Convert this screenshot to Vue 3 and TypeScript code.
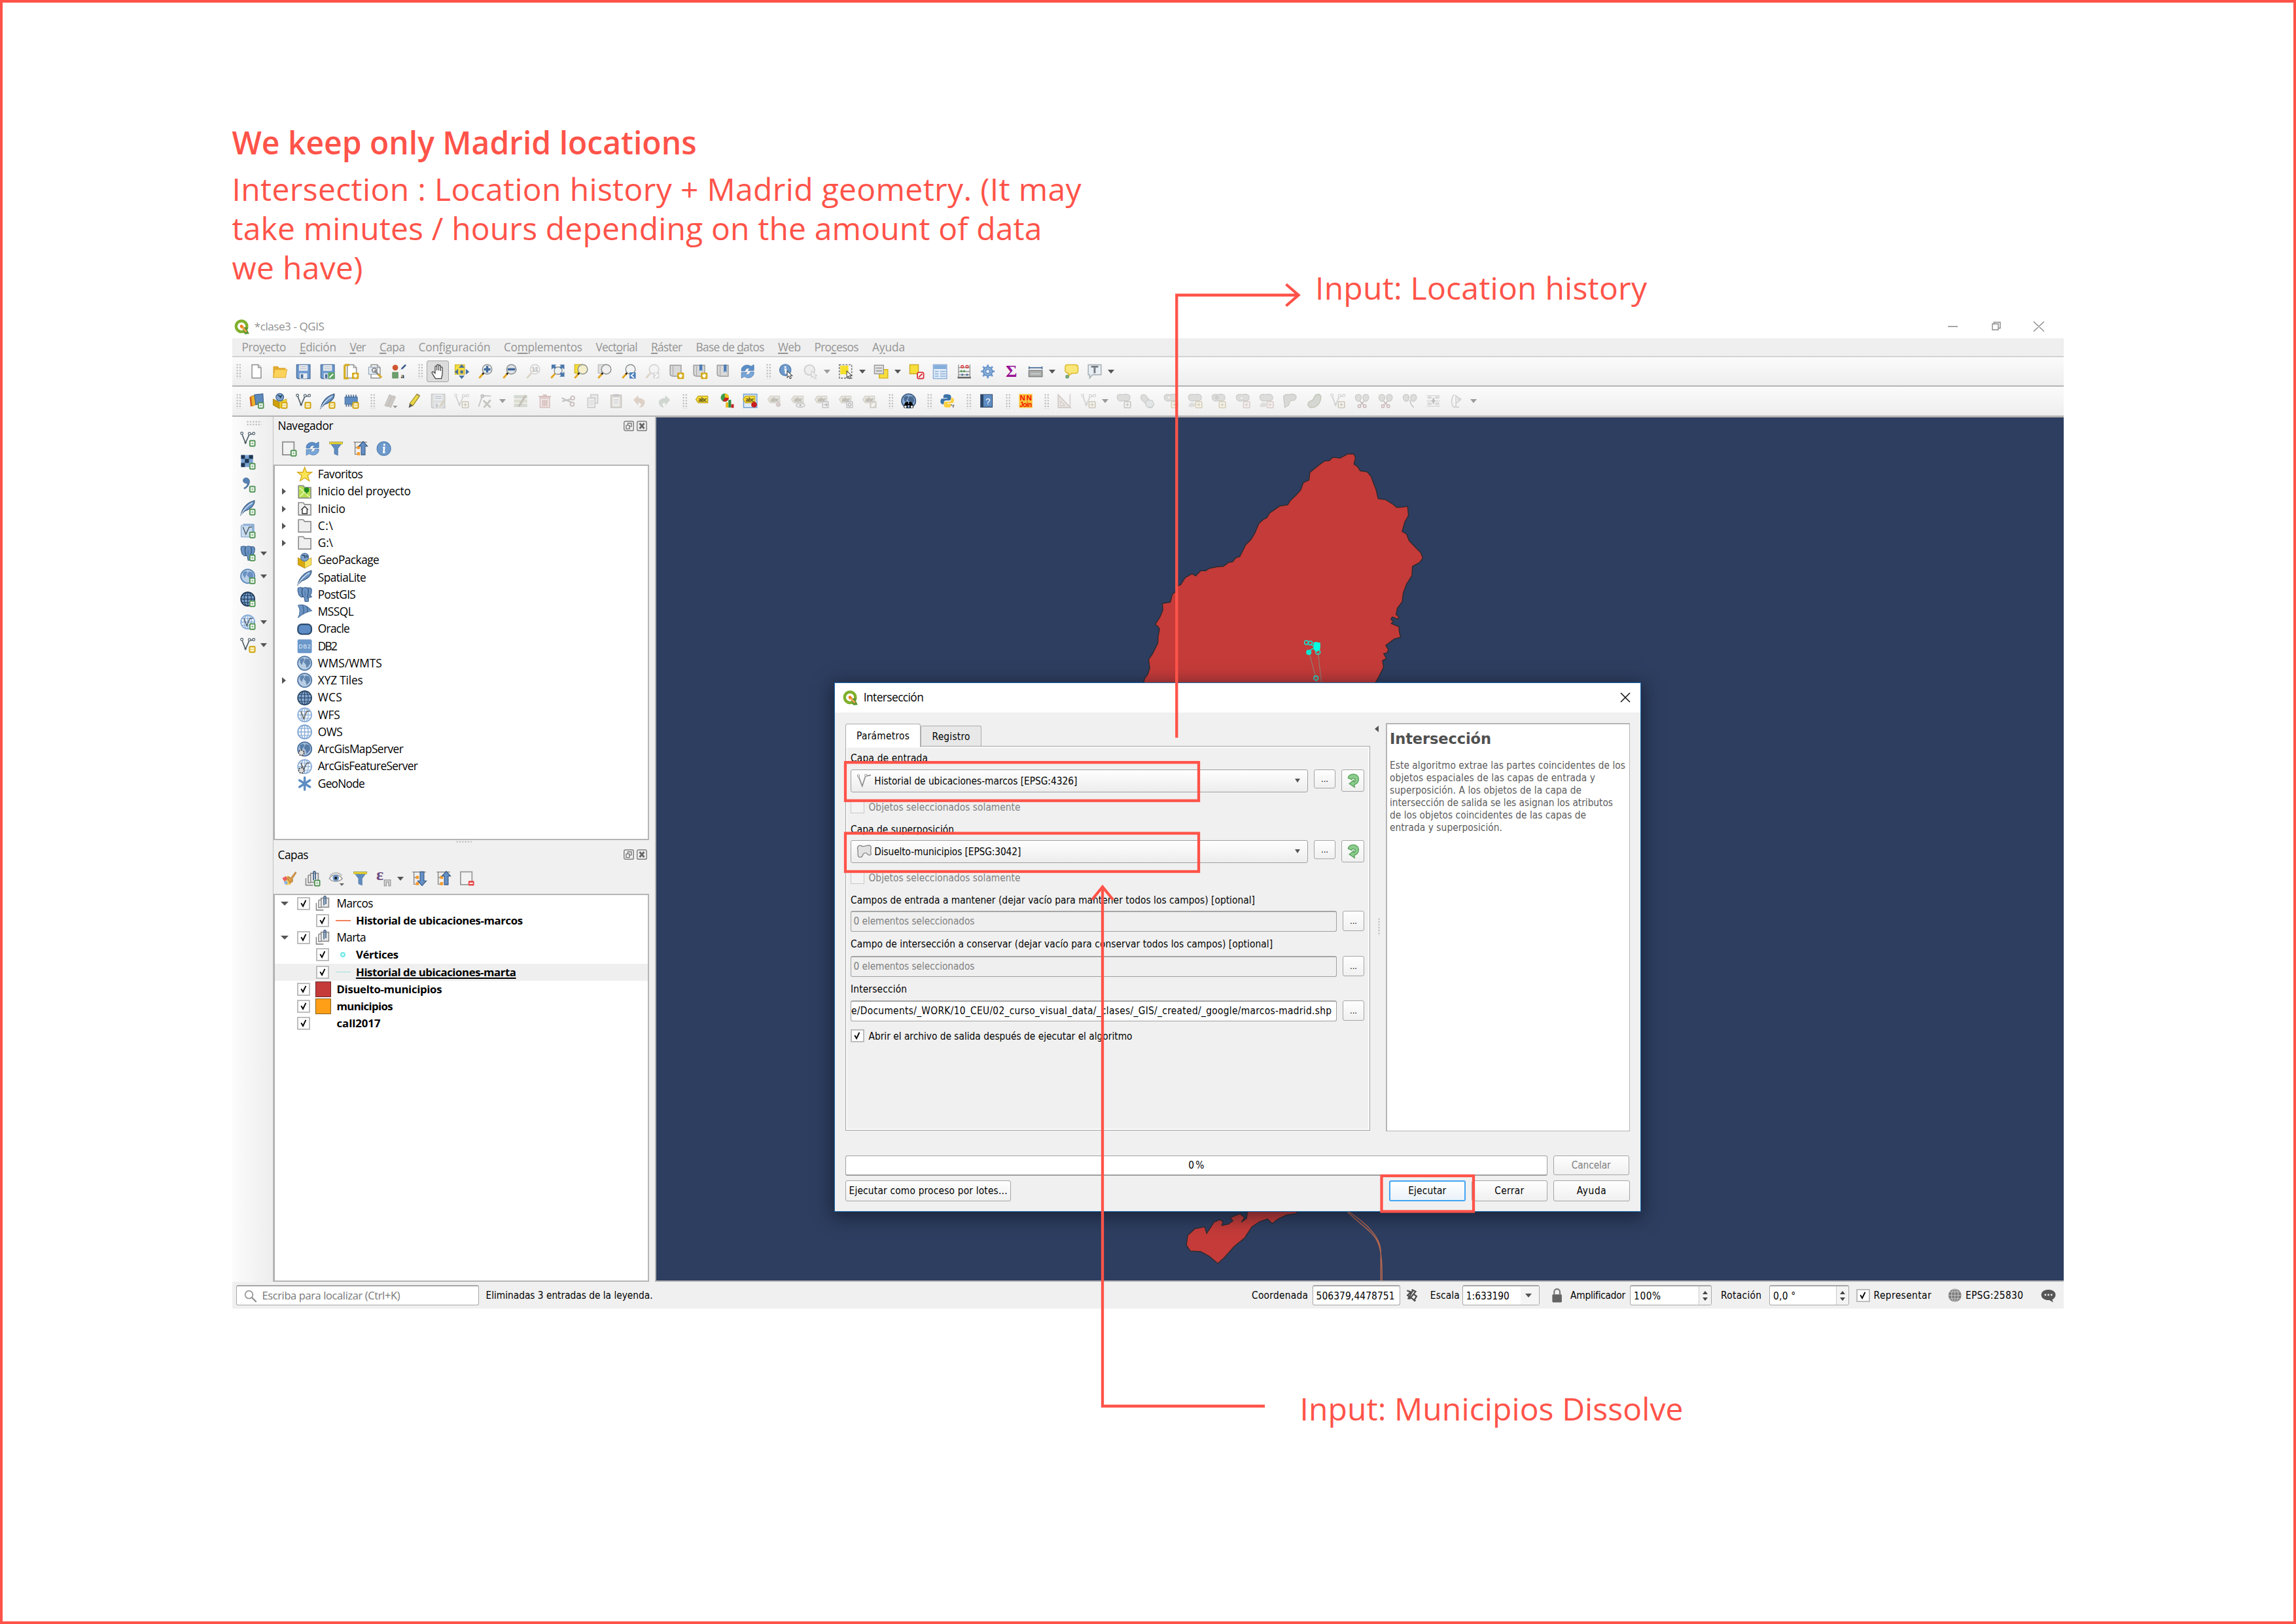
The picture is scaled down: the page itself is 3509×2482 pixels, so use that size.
<script setup lang="ts">
import { h } from 'vue'
import type { FunctionalComponent } from 'vue'

/* Spreads a text run over a given width in pixels. */
const vFit = {
  mounted(el: HTMLElement, binding: { value: number }) {
    const range = document.createRange()
    range.selectNodeContents(el)
    const natural = range.getBoundingClientRect().width
    const count = (el.textContent || '').length
    if (count > 1) el.style.letterSpacing = (binding.value - natural) / (count - 1) + 'px'
    el.style.width = binding.value + 'px'
  },
}

const plus = '<rect x="10.2" y="10" width="5.3" height="5.6" rx=".6" fill="#fff" stroke="#4f9252" stroke-width="1.3"/><path d="M12.8 11.5v2.6M11.5 12.8h2.6" stroke="#8abb8c" stroke-width=".8"/>'
const gold = '<rect x="9.9" y="9.8" width="5.6" height="5.8" rx=".6" fill="#fdf3c8" stroke="#cfa20c" stroke-width="1.3"/><path d="M11 12.7h3.5" stroke="#e9cf70" stroke-width=".9"/>'
const star = '<rect x="9" y="9.2" width="7" height="6.8" rx="1" fill="#d3a80e"/><path d="M12.5 10.3v4.6M10.3 12.6h4.4M11 11.1l3 3M14 11.1l-3 3" stroke="#fff" stroke-width=".9"/>'
const lens = (fill: string, mid = '') =>
  `<path d="M6.2 9.8L1.6 15" stroke="#e3a51d" stroke-width="2"/><path d="M6.8 9.2L5 11" stroke="#222" stroke-width="1.8"/><circle cx="10" cy="5.8" r="5" fill="${fill}" stroke="#8b8f8f" stroke-width="1"/>${mid}`
const lensOff = (mid = '') =>
  `<path d="M6.2 9.8L1.6 15" stroke="#dcd6c8" stroke-width="2"/><circle cx="10" cy="5.8" r="5" fill="#f4f4f4" stroke="#d0d0d0" stroke-width="1"/>${mid}`
const vee = (c: string) =>
  `<path d="M1.8 2.6L5.6 12.4 9.6 3.4 14 2.8" fill="none" stroke="${c}" stroke-width="1.1"/><circle cx="1.8" cy="2.2" r="1.3" fill="#fff" stroke="${c}" stroke-width=".8"/><circle cx="9.8" cy="2.6" r="1.3" fill="#fff" stroke="${c}" stroke-width=".8"/><circle cx="14.2" cy="2.4" r="1.3" fill="#fff" stroke="${c}" stroke-width=".8"/><circle cx="5.6" cy="12" r="1.1" fill="${c}"/>`
const feather = '<path d="M.8 15.6C2 10 6 3 15 .8c.3 4.600-3.500 8.500-10.500 11z" fill="#6a94c6" stroke="#3c5c80" stroke-width=".9"/><path d="M.8 15.600C4 10 8 6 13 3" fill="none" stroke="#d5e3f2" stroke-width=".9"/>'
const globe = (a: string, b: string) =>
  `<circle cx="8" cy="8" r="7.3" fill="${a}" stroke="${b}" stroke-width="1.200"/><path d="M3 4l3-1.500 2 1.500-2 3-1 3-2-3zM9 3l4 1 1 4-2 3-2 2-1-4-2-2z" fill="${b}" opacity=".85"/>`
const grid = (fill: string, line: string) =>
  `<circle cx="8" cy="8" r="7.200" fill="${fill}" stroke="${line}" stroke-width="1.200"/><path d="M8 .8v14.400M.8 8h14.400M2 4.300h12M2 11.700h12" stroke="${line}" stroke-width=".8"/><ellipse cx="8" cy="8" rx="3.800" ry="7.200" fill="none" stroke="${line}" stroke-width=".8"/>`
const elephant = '<path d="M1 1.200C3 .4 5 .6 6 1.200 8 .4 10 .4 11 1.200 13 .4 15 1 15.300 3L15 6.500 13.500 9.300 15.300 9.800 14.500 11H12.200L11.800 15.300H8.300L7.600 10.800 5.800 10.500 4.500 10.800 2 8.500 .8 4z" fill="#6a94c4" stroke="#3d6290" stroke-width=".8"/><path d="M5.700 1.500C4.800 4 5 7.500 6.300 10.300M11.300 1.500C12.300 4 12 7 11 9.500V12" fill="none" stroke="#3a5a80" stroke-width="1"/><path d="M8.400 4.500v5" stroke="#4a70a0" stroke-width=".8"/>'
const folder = '<path d="M1.500 1.500h5l1.500 2h6.500v11h-13z" fill="#efefef" stroke="#8c8c8c" stroke-width="1.100"/>'
const page = (x: number) => `<path d="M${x} 1h6.500l3 3v11h-9.500z" fill="#fff" stroke="#8e8e8e" stroke-width="1"/><path d="M${x + 6.5} 1v3h3" fill="#ddd" stroke="#8e8e8e" stroke-width=".8"/>`
const floppy = (c: string, s: string) => `<path d="M1 1h14v14.500h-13l-1-1z" fill="${c}" stroke="${s}" stroke-width="1"/><rect x="3.500" y="1.300" width="9" height="6" fill="#eceff2"/><path d="M4.500 3.200h7M4.500 5.200h7" stroke="#b9c0c8" stroke-width=".8"/><rect x="4" y="10" width="8" height="5.500" fill="#e9edf0"/><rect x="5.300" y="11" width="2.500" height="4" fill="${s}"/>`
const tag = (x: number, fill: string, line: string, txt: string) =>
  `<path d="M${x} 6.500l2.500-3.500h10v7h-10z" fill="${fill}" stroke="${line}" stroke-width=".8"/><text x="${x + 2.6}" y="8.700" font-size="5.600" font-weight="700" font-family="DejaVu Sans Condensed,sans-serif" fill="${txt}" textLength="9">abc</text>`
const tagOff = (badge: string) => tag(1, '#e6e4dc', '#d2d0c8', '#b4b2ac') + badge
const blob = '<path d="M1 3.500C1.500 1 5 .8 7 1.500c3-1 7-.8 7.500 2.500.3 3-2 4.500-4 4-3-.8-3.500.5-6 .3C2 8 .8 6 1 3.500z" fill="#dddedb" stroke="#cbccc9" stroke-width=".8"/>'
const offBadge = (c: string) => `<rect x="8.500" y="8.800" width="6.500" height="6.500" rx=".8" fill="#f4f3ef" stroke="${c}" stroke-width="1.100"/><path d="M11.700 10.200v3.600M10 12h3.500" stroke="${c}" stroke-width=".9"/>`
const refresh = '<path d="M1.500 7.500V5.500C2.500 1.500 8 0 11.500 2.700L14.500 1v6H8.300l2-1.800C8.500 4 6 4.500 5.200 7.500z" fill="#5c8fc9" stroke="#3d6ea8" stroke-width=".5"/><path d="M14.500 8.500v2c-1 4-6.500 5.500-10 2.800L1.500 15V9h6.200l-2 1.800C7.500 12 10 11.500 10.800 8.500z" fill="#79a7da" stroke="#3d6ea8" stroke-width=".5"/>'
const funnel = '<path d="M1 1h14L9.800 8v7l-3.600-1.500V8z" fill="#5f8cbf" stroke="#4f7aa8" stroke-width=".6"/><rect x="1.200" y="1.200" width="13.600" height="2" fill="#f2dc3c" stroke="#b9a51f" stroke-width=".5"/>'
const treeBase = '<path d="M1 1.200h14M2.500 1.500v12.500h3M2.500 7h2.500" stroke="#8c8c8c" stroke-width="1" fill="none"/><rect x="4.500" y="5.200" width="3.200" height="3.200" fill="#f49a2a"/><rect x="4.500" y="11.800" width="3.200" height="3.200" fill="#f49a2a"/>'
const sheet = (s: string) => `<rect x="1.300" y="1" width="12" height="13.500" fill="#f2f2f2" stroke="${s}" stroke-width="1.200"/>`
const book = '<path d="M1.500 1.500h11.500v11.500H4.500c-2 0-3-.8-3-2.500z" fill="#d9d9d9" stroke="#9a9a9a" stroke-width="1"/><path d="M4.500 1.500v11" stroke="#aaa" stroke-width=".8"/>'
const cards = '<path d="M1 7.500V15h7.500M3.500 4.500V12.500h2.500M3.500 4.500h3" fill="none" stroke="#8a8a8a" stroke-width="1.100"/><rect x="6" y="2.500" width="8" height="9.500" fill="#ececec" stroke="#8a8a8a" stroke-width="1.100"/><path d="M9 10V1.500c0-1.500 2-1.500 2 0V9" fill="none" stroke="#41638a" stroke-width="1.200"/>'
const cursor = '<path d="M9 7.500v7l1.700-1.500 1.300 2.700 1.300-.7-1.300-2.500h2.300z" fill="#fff" stroke="#444" stroke-width=".7"/>'
const leaves = '<path d="M1 3.500C2 .5 6 .5 7 3c.5 2-.5 5.500-2.500 5.500S.5 6 1 3.500zM15 3.500C14 .5 10 .5 9 3c-.5 2 .5 5.500 2.500 5.500S15.500 6 15 3.500z" fill="#dddedb" stroke="#c8c9c6" stroke-width=".8"/>'
const snips = '<path d="M6 8.500l4 4M10 8.500l-4 4" stroke="#c5b9bd" stroke-width="1"/><circle cx="5.200" cy="13.500" r="1.500" fill="none" stroke="#c9b4b8"/><circle cx="10.800" cy="13.500" r="1.500" fill="none" stroke="#c9b4b8"/>'

const glyphs: Record<string, string> = {
  logo: '<circle cx="7.600" cy="7.400" r="5.700" fill="none" stroke="#7fb02c" stroke-width="3"/><path d="M8 8l7 .8-1.500 1.800 2.200 4.700-4.700.3z" fill="#589632"/><path d="M6.500 6.500l4 .5-1 1 4 4.500-1.500 1.200-4-4.500-1.200 1z" fill="#f3a04a"/><circle cx="7.500" cy="7.200" r="1.500" fill="#ee7913"/>',
  new: page(3.5),
  open: '<path d="M1 2.500h5l1.200 1.800H14V14H1z" fill="#e0a92d"/><path d="M2.800 6H15.500L14 14.500H1z" fill="#fbd35b" stroke="#e2ab33" stroke-width=".7"/>',
  save: floppy('#6f9bd0', '#4a6f9d'),
  saveas: floppy('#6f9bd0', '#4a6f9d') + '<rect x="8.500" y="9" width="7" height="7" rx="1" fill="#5fa564"/><path d="M10 14.500l3.800-3.800" stroke="#fff" stroke-width="1.300"/>',
  layout: page(4) + '<path d="M1.200 1.200h5M1.200 1.200v14h4" stroke="#d4ac20" stroke-width="2.200" fill="none"/>' + star,
  layouts: page(3.5) + '<rect x="1" y="3.500" width="9" height="7.500" fill="#e2edf7" stroke="#9aa7b5" stroke-width=".8"/><path d="M7 7l5.500 5.500" stroke="#8c8c8c" stroke-width="2"/><path d="M11 11l3.500 3.500" stroke="#d9ac2c" stroke-width="2.200"/><circle cx="6.800" cy="6.800" r="2.200" fill="none" stroke="#8c8c8c" stroke-width="1.200"/>',
  style: '<circle cx="4.200" cy="4" r="3" fill="#cf5630"/><path d="M10 6l1-2 3.500-3.500L15.800 1.800 12 5.500z" fill="#3d5f8a"/><rect x="1.300" y="9" width="5.700" height="6" fill="#6da06d" stroke="#4d834f" stroke-width=".6"/><text x="10" y="14.800" font-size="7.500" font-weight="700" font-family="Liberation Serif,serif" fill="#333">a</text>',
  pan: '<path d="M5.200 15.500l-3.500-5.500c-.8-1.400.8-2.200 1.700-1.200L4.800 10V3.300c0-1.300 1.800-1.300 1.900 0V7 1.800c0-1.300 1.900-1.300 1.900 0V7 2.500c0-1.300 1.900-1.300 1.900 0v5-3.300c0-1.200 1.900-1.200 1.900 0V11l-1 4.500z" fill="#fff" stroke="#444" stroke-width=".9"/>',
  panto: '<rect x="1" y="1" width="10" height="10" fill="#f3dc3f" stroke="#c8ae25" stroke-width=".7"/><path d="M8 .6l3 3.600H5zM8 15.900l3-3.600H5zM.6 8.400l3.600-3v6zM15.900 8.400l-3.600-3v6z" fill="#466f9f"/><path d="M6.500 7h3v3h-3z" fill="#466f9f"/>',
  zin: lens('#eef2f4', '<path d="M10 2.300v7M6.500 5.800h7" stroke="#41699a" stroke-width="2.400"/>'),
  zout: lens('#dfe4e6', '<path d="M6 5.800h8" stroke="#41699a" stroke-width="2.400"/>'),
  zone: lensOff('<text x="6.300" y="8" font-size="6" font-weight="700" font-family="DejaVu Sans Condensed,sans-serif" fill="#bbb" textLength="7.500">1:1</text>'),
  zfull: '<path d="M6.800 9.200L1.600 15" stroke="#e3a51d" stroke-width="2"/><rect x="5" y="3.500" width="8" height="7.500" rx="3" fill="#eef1f2" stroke="#8b8f8f"/><path d="M2 .8h5L5.700 2.200 7 4 5.600 5.500 4 4.300 2 6zM15.500 .8h-5l1.300 1.400L10.500 4l1.400 1.500L13.500 4.300l2 1.700zM15.500 13.500h-5l1.300-1.400L10.500 10.300 11.900 8.800 13.500 10l2-1.700z" fill="#4a76ab"/>',
  zsel: '<rect x="1.500" y=".8" width="8" height="9" fill="#f5dc33" stroke="#c6ad20" stroke-width=".7"/>' + lens('#f4efcb'),
  zlay: '<rect x="1.500" y=".8" width="8" height="9" fill="#dedede" stroke="#b5b5b5" stroke-width=".7"/>' + lens('#efefef'),
  zlast: lens('#f3f3f3') + '<rect x="9" y="9" width="6.500" height="6.500" fill="#4a7fbd"/><path d="M13.500 10l-2.700 2.300 2.700 2.300" fill="none" stroke="#fff" stroke-width="1.200"/>',
  znext: lensOff('<rect x="9" y="9" width="6.500" height="6.500" fill="#dcdcdc"/><path d="M11 10l2.700 2.300L11 14.600" fill="none" stroke="#fff" stroke-width="1.200"/>'),
  view: book + star,
  bknew: book + '<path d="M7.500.8h3v7L9 6.500 7.500 7.800z" fill="#4d7db5"/>' + star,
  bk: book + '<path d="M8.300.8h3v8.500L9.800 7.500 8.300 9.300z" fill="#4d7db5"/>',
  refresh,
  ident: '<circle cx="7" cy="6.500" r="6" fill="#6d9acb" stroke="#4a79ad" stroke-width=".8"/><path d="M7 2.500v1.800M6 6h1.500v4.500" stroke="#fff" stroke-width="1.900" fill="none"/>' + cursor,
  action: '<circle cx="7" cy="6.500" r="5.300" fill="#eee" stroke="#d2d2d2" stroke-width="1.500"/><path d="M9 7.500v7l1.700-1.500 1.300 2.700h2l-1.300-3.200h2z" fill="#f3f3f3" stroke="#ccc" stroke-width=".7"/>',
  select: '<rect x="1.200" y="1" width="13" height="14" fill="none" stroke="#777" stroke-width="1.100" stroke-dasharray="2 1.300"/><rect x="2.200" y="2" width="8.500" height="9" fill="#f7e02c"/>' + cursor,
  form: '<rect x="6" y="6" width="9" height="9" fill="#f8de3a" stroke="#d3b423" stroke-width="1"/><rect x="1" y="1.500" width="9.500" height="9" fill="#e3e3e3" stroke="#999" stroke-width="1"/><path d="M2.500 4.500h6.500M2.500 7.500h6.500" stroke="#999" stroke-width="1.100"/>',
  desel: '<rect x="1" y="1" width="9" height="9.500" fill="#f8de3a" stroke="#c9ad28" stroke-width="1"/><rect x="9" y="9" width="6.500" height="6.500" rx="1.500" fill="#fff" stroke="#d8323c" stroke-width="1.300"/><path d="M10.500 14l3.500-3.500" stroke="#d8323c" stroke-width="1.400"/>',
  table: '<rect x="1" y="1" width="14" height="14.500" fill="#e6eff9" stroke="#8fb2da" stroke-width="1.100"/><rect x="1.500" y="1.500" width="13" height="4" fill="#86aedb"/><path d="M2.500 8h4M8 8h6M2.500 10.500h4M8 10.500h6M2.500 13h4M8 13h6" stroke="#93b5da" stroke-width="1.200"/>',
  abacus: '<path d="M2 .8v13M14 .8v13M2 4h12M2 8h12M2 11.500h12" stroke="#999" stroke-width="1"/><path d="M1 14.500h14" stroke="#666" stroke-width="1.800"/><g stroke-width="1"><circle cx="6" cy="3" r="1.300" fill="none" stroke="#d93c3c"/><circle cx="11" cy="3" r="1.300" fill="none" stroke="#d93c3c"/><circle cx="5" cy="7.700" r="1.200" fill="#5a9b5c"/><circle cx="8" cy="7.700" r="1.200" fill="#5a9b5c"/><circle cx="6" cy="11.500" r="1.200" fill="#56779d"/><circle cx="11" cy="11.500" r="1.200" fill="#56779d"/></g>',
  gear: '<path d="M8 .8v14.400M.8 8h14.400M2.900 2.900l10.200 10.200M13.100 2.900L2.900 13.100" stroke="#6f9bd0" stroke-width="1.900"/><circle cx="8" cy="8" r="4.900" fill="#84acda" stroke="#5784ba" stroke-width=".8"/><circle cx="8" cy="8" r="2" fill="#e9f0f8" stroke="#5784ba" stroke-width=".7"/>',
  sigma: '<text x="2" y="14" font-size="18" font-weight="700" font-family="Liberation Serif,serif" fill="#9b1296" textLength="12" lengthAdjust="spacingAndGlyphs">Σ</text>',
  measure: '<rect x="1" y="7" width="14" height="6.500" fill="#aeb0b0" stroke="#808383" stroke-width="1"/><path d="M1 4.200h14M1.200 2.800v2.800M14.800 2.800v2.800" stroke="#476c98" stroke-width="1.100"/><path d="M3 10.500h10" stroke="#ddd" stroke-width=".7"/>',
  tip: '<path d="M4 1h9c2 0 2.500 1.200 2.500 3v3c0 2-1 3-2.500 3H9l-4 3 .5-3.200C3 9.500 2 8.500 2 7V4c0-2 .7-3 2-3z" fill="#fbe777" stroke="#d9b92c" stroke-width="1"/><circle cx="4.200" cy="13.500" r="2" fill="#77a777"/>',
  note: '<path d="M1.500 1h13.500v10.500H6L3 15v-3.500H1.500z" fill="#e7eff4" stroke="#a5adb2" stroke-width="1"/><path d="M4.500 3h7.500M8.200 3v7" stroke="#777c80" stroke-width="2"/>',
  dsm: '<path d="M1 4l6-1v9l-5 2z" fill="#d8572d"/><path d="M2.500 3l7-1 1 9-7 2.500z" fill="#efb02a" stroke="#b77c15" stroke-width=".5"/><path d="M6 1.500l9-1 .5 9-8 2.500z" fill="#5d88bb" stroke="#3a5f8c" stroke-width=".7"/>' + plus,
  gpkgnew: '<circle cx="8" cy="4.200" r="4" fill="#7fa3cc" stroke="#3a5f8c" stroke-width=".8"/><path d="M6 2l2 1 1 2M10 2l-1 2" stroke="#25425f" stroke-width="1.200" fill="none"/><path d="M1 6l6.500 3.500V16L1 12.500z" fill="#cfa10a" stroke="#8f6e06" stroke-width=".5"/><path d="M7.500 9.500L15 6v6.500L7.500 16z" fill="#f6da2e" stroke="#ae8d10" stroke-width=".5"/>' + gold,
  shpnew: vee('#4d5c66') + gold,
  feathernew: feather + gold,
  chip: '<rect x="1.500" y="4" width="13" height="7.500" fill="#5e8cc2" stroke="#41699a" stroke-width=".7"/><path d="M3 1.500v3M5.500 1.500v3M8 1.500v3M10.500 1.500v3M13 1.500v3M3 11v3M5.500 11v3M8 11v3" stroke="#4c6c90" stroke-width="1.200"/>' + gold,
  pencils: '<path d="M2 13L7 1.500l2.500 1L5 14zM5.500 13.500l5-11 3 1.200L8.500 15z" fill="#cdc9c5" stroke="#bab6b2" stroke-width=".6"/><path d="M10.500 13h5l-2.500 2.800z" fill="#999"/>',
  pencil: '<path d="M3.500 11L11 1l3 1.800L6.800 13z" fill="#ecd74a" stroke="#9c8b24" stroke-width=".8"/><path d="M3.500 11L2.500 15.500 6.800 13z" fill="#555"/><path d="M11 1l3 1.800" stroke="#a08c60" stroke-width="1.400"/>',
  saveed: floppy('#dedede', '#c9c9c9') + '<path d="M8.500 14l5-7 1.700 1.200-5 7z" fill="#d6d0c0"/>',
  veeoff: vee('#cfcfcf') + offBadge('#cdc8ba'),
  vertex: '<path d="M1 14L5 2.500 14 3" fill="none" stroke="#c4c4c4" stroke-width="1.200"/><circle cx="5" cy="3" r="1.500" fill="#ddd" stroke="#bbb"/><path d="M6 7.500l7.500 7.500M13.500 7l-7 8" stroke="#c5c5c0" stroke-width="2"/>',
  multi: '<rect x="1" y="2" width="14" height="3.500" fill="#d5dad2"/><rect x="1" y="6.500" width="14" height="3.500" fill="#dcded0"/><rect x="1" y="11" width="14" height="3.500" fill="#d5dad2"/><path d="M5 13.500L12.500 1.500l1.800 1.200L7 14.500z" fill="#c5c0b8"/>',
  trash: '<path d="M3 5h10v10H3z" fill="#eee4e3" stroke="#d5bdbb" stroke-width="1"/><path d="M1.500 3.500h13M6 2h4M6 7v6.500M8 7v6.500M10 7v6.500" stroke="#d2b6b4" stroke-width="1.200"/>',
  cut: '<path d="M1 5l10 4.500M1.500 8.500L11 6" stroke="#c4c4c4" stroke-width="1.500"/><circle cx="12.500" cy="5" r="2" fill="none" stroke="#c9bcbc" stroke-width="1.200"/><circle cx="12" cy="11.500" r="2" fill="none" stroke="#c9bcbc" stroke-width="1.200"/>',
  copy: '<rect x="6" y="1.500" width="7.500" height="9" fill="#e9e9e9" stroke="#cacaca"/><rect x="3" y="5" width="7.500" height="10" fill="#eee" stroke="#c8c8c8"/><path d="M4.500 8h4.500M4.500 10h4.500M4.500 12h4.500" stroke="#d5d5d5" stroke-width=".8"/>',
  paste: '<rect x="2.500" y="2" width="11" height="13" fill="#dddad6" stroke="#c9c6c2"/><rect x="5" y="1" width="6" height="2.500" fill="#c5c5c5"/><rect x="4.500" y="4.500" width="7" height="9" fill="#f1f1f1"/><path d="M5.500 7h5M5.500 9h5M5.500 11h5" stroke="#ccc" stroke-width=".8"/>',
  undo: '<path d="M1.500 7L6.500 2v3c5 0 8 3 6.500 6.500-1 2.500-3 3.500-5.500 3.500 2-1.500 3.500-5-1-5v3z" fill="#ddd0c7"/>',
  redo: '<path d="M14.500 7L9.500 2v3c-5 0-8 3-6.500 6.500 1 2.500 3 3.500 5.500 3.500-2-1.500-3.500-5 1-5v3z" fill="#d0d6d0"/>',
  abc: tag(1, '#f7dc35', '#bba11f', '#5d5220'),
  diagram: '<circle cx="6" cy="4.500" r="4.300" fill="#3c9b4d"/><path d="M6 4.500V.2A4.300 4.300 0 0 1 10 6z" fill="#f2c61f"/><path d="M6 4.500L10.200 5A4.300 4.300 0 0 1 4 8.300z" fill="#cc1f1f"/><rect x="7" y="9.500" width="2.600" height="5.500" fill="#e6b91d"/><rect x="9.800" y="7" width="2.800" height="8" fill="#2e8c40"/><rect x="12.700" y="11.500" width="2.700" height="3.800" fill="#c42020"/>',
  abcpin: '<rect x="1" y="1" width="14" height="14" fill="#dfeaf7" stroke="#6d9ed6" stroke-width="1"/>' + tag(0.5, '#f7dc35', '#bba11f', '#5d5220') + '<circle cx="12" cy="12" r="3" fill="#c81e1e"/>',
  t1: tagOff('<circle cx="12" cy="11.800" r="2.600" fill="#d6cbcb"/>'),
  t2: tagOff('<ellipse cx="10.500" cy="12.500" rx="4.500" ry="2.300" fill="#eee" stroke="#c4c4c4"/><circle cx="10.500" cy="12.500" r="1.200" fill="#bbb"/>'),
  t3: tagOff('<rect x="9" y="9" width="6" height="6" fill="#f3f3f3" stroke="#c4c4c4"/><path d="M10 12h4M12.500 10.500L14 12l-1.500 1.500" stroke="#bbb" fill="none"/>'),
  t4: tagOff('<rect x="9" y="9" width="6" height="6" fill="#f3f3f3" stroke="#c4c4c4"/><circle cx="12" cy="12" r="1.500" fill="none" stroke="#bbb"/>'),
  t5: tagOff('<rect x="9" y="9" width="6" height="6" fill="#e3e1dc" stroke="#ccc9c0"/><path d="M10.500 14l3-3.500" stroke="#fff" stroke-width="1.200"/>'),
  osm: globe('#8fb0d6', '#3e5e85') + '<path d="M3 15.500c0-4 1.500-6 3-6.500h1.500v2h1V9H10c1.500.5 3 2.500 3 6.500H9v-3H7v3z" fill="#000"/><circle cx="4.700" cy="14" r="1.200" fill="#fff"/><circle cx="11.300" cy="14" r="1.200" fill="#fff"/>',
  python: '<path d="M7.500 1c-3 0-3.500 1-3.500 2.500V5h4v.7H2.500C1 6 .8 8 1 9.500c.3 1.200 1 2 2 2h1.500V9.500C4.500 8 5.500 7.500 7 7.500h3c1.200 0 2-1 2-2v-2C12 1.500 10 1 7.500 1z" fill="#3b73a8"/><path d="M8.500 15c3 0 3.500-1 3.500-2.500V11H8v-.7h5.500c1.500 0 1.700-2.300 1.500-3.800-.3-1.200-1-1.700-2-1.700H12v2c0 1.500-1 2-2.500 2h-3c-1.200 0-2 1-2 2v2c0 1.700 1.500 2.200 4 2.200z" fill="#fbd03f"/><path d="M12 12l1.500 1M15 12l-1 3" stroke="#666" stroke-width="1"/>',
  help: '<rect x="1.500" y="1" width="13" height="14" fill="#2c4566"/><rect x="4.800" y="1.600" width="9" height="12.500" fill="#5f8dc4"/><text x="7" y="11.500" font-size="9" font-family="Liberation Sans,sans-serif" fill="#fff">?</text>',
  nn: '<rect x="1" y=".8" width="14" height="14.600" fill="#f8c63c"/><text x="1.800" y="7.400" font-size="8" font-weight="700" font-family="Liberation Sans,sans-serif" fill="#f50f00" textLength="12.500">NN</text><text x="1.600" y="14.200" font-size="7" font-weight="700" font-family="Liberation Sans,sans-serif" fill="#f50f00" textLength="13">Join</text>',
  tri: '<path d="M1.500 1.500L14.500 15H1.500z" fill="#e7e3e0" stroke="#cfc8c6" stroke-width="1.100"/><path d="M4 8.500l4.200 4.300H4z" fill="#f4f4f4" stroke="#cfc8c6" stroke-width=".8"/><path d="M14 1v14" stroke="#d8d2d0" stroke-width="1.200"/>',
  d1: blob + offBadge('#c6c6c6'),
  d2: '<path d="M1 4C2 0 6 1 8 5l4 4c3 2 3 5 0 6-4 1-5-2-6-4C4 8 .5 7 1 4z" fill="#dddedb" stroke="#cbccc9" stroke-width=".8"/><path d="M8 7l5 .5 2 4-3 3.500-5-1-1-4z" fill="#e3e5e6" stroke="#c5c9cb" stroke-width=".7"/>',
  d3: blob + '<circle cx="6" cy="4.500" r="1.500" fill="#f7f7f7" stroke="#ccc" stroke-width=".6"/>' + offBadge('#d6cfb4'),
  d4: blob + '<path d="M1 14.500c0-4 2-5 5-4.500s2 3 0 4.500z" fill="#dddedb"/>' + offBadge('#d6cfb4'),
  d5: blob + '<circle cx="6" cy="4.500" r="2.200" fill="#cfd0cd"/>' + offBadge('#d6cfb4'),
  d6: blob + '<circle cx="6.500" cy="5" r="1.500" fill="#f7f7f7" stroke="#ccc" stroke-width=".6"/>' + offBadge('#d9cccc'),
  d7: blob + '<path d="M1 14.500c0-4 2-5 5-4.500s2 3 0 4.500z" fill="#dddedb"/>' + offBadge('#d9cccc'),
  d8: '<path d="M1 3.500C2 1 5 1 7 1.500c3-1 7-.8 7.500 2.500 0 2.500-2 4-5 3.700-2 .3-2 2-3 4.800L2.500 15z" fill="#d9dad7" stroke="#c5c6c0" stroke-width=".8"/>',
  d9: '<path d="M3 14.500c-3-2-1.500-6 1.500-6.500 3-.3 2.500-3 4-5 2-3 6-2.500 6.500 1 0 5-3 9.500-7.500 10.800-2 .5-3.500.3-4.500-.3z" fill="#d5d7d2" stroke="#c5c6b8" stroke-width="1"/>',
  s1: leaves + snips,
  s2: leaves + '<path d="M8 7l1.500 5 2.500 3" fill="none" stroke="#c2c2c2" stroke-width="1"/>',
  s3: '<path d="M1 2.500h14M1 8h14M1 13.500h14" stroke="#d8d8d8" stroke-width="1"/><ellipse cx="4" cy="4.500" rx="2.500" ry="1.500" fill="#dadbd8"/><ellipse cx="12" cy="4.500" rx="2.500" ry="1.500" fill="#dadbd8"/><ellipse cx="4" cy="11" rx="2.500" ry="1.500" fill="#dadbd8"/><ellipse cx="12" cy="11" rx="2.500" ry="1.500" fill="#dadbd8"/><path d="M8 5v6M6 8h4" stroke="#bbb" stroke-width="1.600"/>',
  s4: '<path d="M5 1.500C2 5 1.500 11 4.500 14.500h6M7 3v11M6 2l6 4.500-5 4" fill="none" stroke="#cfcfcf" stroke-width="1.100"/><path d="M8 3l5 3-4 2z" fill="#d8d8d6"/>',
  vadd: vee('#4d5c66') + plus,
  raster: '<rect x="1" y="1" width="12.500" height="12.500" fill="#7ba3d3"/><path d="M1 1h4v4H1zM9.300 1h4.200v4H9.300zM5 5h4.300v4.200H5zM1 9.300h4v4.200H1z" fill="#1e3652"/>' + plus,
  comma: '<path d="M4 11.500c3-1.500 4-3.500 3.500-5C5 7 3 5.500 3.200 3.500 3.500 1.500 5 .8 6.500 1c3 .3 4 3 3 6-.8 2.500-2.500 4.500-5 5.500z" fill="#5782b5" stroke="#3d638f" stroke-width=".6"/>' + plus,
  featheradd: feather + plus,
  virt: '<rect x="3" y="1" width="12" height="12" rx="1" fill="#8fb0d6"/><rect x="1" y="2.500" width="12" height="12.500" rx="1" fill="#c7daee" stroke="#7ca1cc" stroke-width=".7"/><path d="M3 4.500L6 12l3.500-7.500h3" fill="none" stroke="#4d5c66"/>' + plus,
  pgadd: elephant + plus,
  wmsadd: globe('#b8cfe8', '#5a85b8') + plus,
  wcsadd: grid('#7ba0cc', '#1f3a58') + plus,
  wfsadd: grid('#e8f0f8', '#86abd8') + '<path d="M4 4l3 8 3-7.500 3-.5" fill="none" stroke="#4d5c66"/>' + plus,
  addlayer: sheet('#8c8c8c') + plus,
  rmlayer: sheet('#9a9a9a') + '<rect x="9.500" y="10.500" width="6" height="5" rx=".8" fill="#e84545"/><path d="M10.700 13h3.600" stroke="#fff" stroke-width="1.300"/>',
  funnel,
  collapse: treeBase + '<path d="M11 .5l4.500 5h-2.500v9h-4v-9H6.500z" fill="#6490c6" stroke="#355680" stroke-width=".8"/>',
  expand: treeBase + '<path d="M11 15.500l4.500-5h-2.500v-9.500h-4v9.500H6.500z" fill="#6490c6" stroke="#355680" stroke-width=".8"/>',
  info: '<circle cx="8" cy="8" r="7.200" fill="#6d9acb" stroke="#4f7fb5" stroke-width=".8"/><path d="M8.500 3v2M7 6.800h1.500l-.7 5h1.500" stroke="#fff" stroke-width="1.700" fill="none"/>',
  brush: '<path d="M2 7.500L7 5l5 4-2.500 5.500L5 15z" fill="#f3cc55"/><path d="M1 7.500l4-2 1.500 3.500L3 11z" fill="#ea6060"/><path d="M2.500 11.500l3-1.500 1.500 3.500-3 1z" fill="#8fb4e2"/><path d="M7 6l3 1.200L14.800 1l1 1-4 6 .2 3.200L9 13 6.500 8.500z" fill="#d99a48" stroke="#a87534" stroke-width=".5"/>',
  cards, cardsadd: cards + plus,
  eye: '<path d="M.8 8C4 3 11 3 14.500 8 11 12 4 12 .8 8z" fill="#fff" stroke="#999" stroke-width="1"/><path d="M1.500 5C5 1 11 1 14 5" fill="none" stroke="#b0b0b0" stroke-width="1"/><circle cx="7.700" cy="7.500" r="3.300" fill="#6a94c6"/><circle cx="7.700" cy="7.500" r="1.500" fill="#222"/><path d="M11.500 13h5l-2.500 2.800z" fill="#666"/>',
  eps: '<text x="0" y="9.400" font-size="18" font-weight="700" font-family="Liberation Serif,serif" fill="#6c4a80">ε</text><path d="M8.500 15.700V9.500h6.500v6.200h-2v-4h-2.400v4z" fill="#d5d5d5" stroke="#9c9c9c" stroke-width=".9"/>',
  starfav: '<path d="M8 .8l2 5.200h5.500l-4.400 3.400 1.700 5.700L8 11.800l-4.800 3.300 1.700-5.700L.5 6H6z" fill="#fbe555" stroke="#d6aa1c" stroke-width=".9"/>',
  home: folder.replace('#efefef', '#b5dd4e') + '<path d="M2.500 4l5 4 6 6M8 8L3 13" stroke="#e2f4a8" stroke-width="1.300"/><circle cx="10" cy="6" r="2.700" fill="#1f8a1f"/><path d="M10 7v3" stroke="#1f8a1f" stroke-width="1.200"/>',
  house: folder + '<path d="M4.500 9L8 5.500 11.500 9M5.500 8.500V13h5V8.500" fill="#fff" stroke="#333" stroke-width="1"/>',
  folder,
  gpkg: '<path d="M1 5l7 4v7L1 12.500z" fill="#d9a90c" stroke="#9f7a08" stroke-width=".5"/><path d="M8 9l7-4v7.500L8 16z" fill="#f8e15a" stroke="#b59417" stroke-width=".5"/><circle cx="8" cy="4.500" r="4.200" fill="#7fa3cc" stroke="#4a6f9a" stroke-width=".7"/><path d="M5.500 2.500l2.500.5.500 2.500M10 2.500l1 2.500" stroke="#2d4a6a" stroke-width="1.300" fill="none"/>',
  feather, elephant,
  mssql: '<path d="M1 1.500C3 .8 5 .6 7 1.200c3.500 1 6 3 8.500 6C12 7.800 5 10.500 1 14.500 3.500 10 3.500 5.500 1 1.500z" fill="#6a93c3" stroke="#50759f" stroke-width=".7"/><path d="M5.500 1.200c2 3.300 2 6.300.8 9.500M10 2.700c1.300 2 1.400 4 .6 6" fill="none" stroke="#3f648e" stroke-width=".9"/>',
  oracle: '<rect x=".9" y="2.800" width="14.200" height="10.400" rx="4" fill="#5d8cc6" stroke="#2c4a6c" stroke-width="1.500"/>',
  db2: '<rect x=".5" y=".8" width="15" height="14.400" rx="1.500" fill="#6b98cb"/><text x="1.800" y="10.300" font-size="5.800" font-family="Liberation Sans,sans-serif" fill="#e8f0f8" textLength="12.400">DB2</text>',
  wms: globe('#b9cde4', '#5279a6'),
  wcs: grid('#86a8d0', '#2b4868'),
  wfs: grid('#f2f6fb', '#8db0da') + '<path d="M4 4l3 8 3-7.500 3-.5" fill="none" stroke="#666" stroke-width="1.100"/>',
  ows: grid('#f4f8fc', '#7fa5d2'),
  arcmap: globe('#a4bedb', '#4a719e') + '<circle cx="4.500" cy="12" r="2.800" fill="#ddd" stroke="#444" stroke-width="1.200" stroke-dasharray="1.500 1"/>',
  arcfeat: grid('#f2f6fb', '#8db0da') + '<path d="M4 4l3 7 3-6.500 3-.5" fill="none" stroke="#555"/><circle cx="4.500" cy="12" r="2.800" fill="#ddd" stroke="#444" stroke-width="1.200" stroke-dasharray="1.500 1"/>',
  geonode: '<path d="M8 1.500v13M2.500 4.500l11 7M13.500 4.500l-11 7" stroke="#5f8dc4" stroke-width="2.400" stroke-linecap="round"/>',
  veegray: '<path d="M2 3.500L6 14 9.500 3.500 15 2.500" fill="none" stroke="#8a8a8a" stroke-width="1.100"/><circle cx="2" cy="3.200" r="1.100" fill="#fff" stroke="#999" stroke-width=".7"/><circle cx="9.800" cy="2.800" r="1.100" fill="#fff" stroke="#999" stroke-width=".7"/>',
  poly: '<path d="M1 5C1.500 2 4 1.500 6 3c2 .8 5-1.500 8-.8 2 .8 1.300 3 .8 5 0 2 1 3 .2 4.500-1.500 1-3.500.5-4.300-1.500-2.200-.5-3.700.3-4.200 2.300-.5 2-3.500 2.800-4.700 1C1 11 2 8 1 5z" fill="#e2e2e2" stroke="#8d8d8d" stroke-width="1"/>',
  iterate: '<path d="M3 5.500C3.500 1.500 8.500 .6 11.500 2.200 15.500 4.500 14.500 11.500 9.500 12.300l.3 2.900-5.600-3.700 4.800-3.700.2 1.900c2-.8 1.800-3.300 0-3.700C7.800 5.500 7 6 6.800 7.200z" fill="#8ccb8d" stroke="#57a45b" stroke-width=".9"/>',
  mag: '<circle cx="6.500" cy="6.500" r="4.500" fill="none" stroke="#8a8a8a" stroke-width="1.200"/><path d="M10 10l5 5" stroke="#8a8a8a" stroke-width="1.600"/>',
  extents: '<path d="M3 3l4 1.500-3.500 3.500L12 14M8 2l4 2-6.500 8M4 12l5-9M10 7l3 2-3 5" fill="none" stroke="#4d4d4d" stroke-width="1.500"/>',
  lock: '<rect x="3" y="7" width="10" height="8.500" rx="1" fill="#636363"/><path d="M5 7V4.500c0-4 6-4 6 0V7" fill="none" stroke="#777" stroke-width="1.500"/>',
  crs: '<circle cx="8" cy="8" r="6.800" fill="#7c7c7c"/><path d="M8 1v14M1 8h14M2.500 4.500h11M2.500 11.500h11" stroke="#c8c8c8" stroke-width=".7"/><ellipse cx="8" cy="8" rx="3.500" ry="6.800" fill="none" stroke="#c8c8c8" stroke-width=".7"/>',
  bubble: '<path d="M8 2c4 0 7.500 2 7.500 5.500 0 2.300-1.500 4-3.500 5l1 3-4-2.500C4 13.300.5 11 .5 7.500S4 2 8 2z" fill="#565656"/><circle cx="4.800" cy="7.500" r="1" fill="#eee"/><circle cx="8" cy="7.500" r="1" fill="#eee"/><circle cx="11.200" cy="7.500" r="1" fill="#eee"/>',
}

const Ico: FunctionalComponent<{ n: string }> = (props) =>
  h('svg', { class: 'ico', viewBox: '0 0 16 16', innerHTML: glyphs[props.n] })
Ico.props = ['n']

const menus: [string, string, string, number][] = [
  ['Pro', 'y', 'ecto', 68], ['', 'E', 'dición', 56], ['', 'V', 'er', 25], ['', 'C', 'apa', 39],
  ['Con', 'f', 'iguración', 110], ['Co', 'm', 'plementos', 120], ['Vect', 'o', 'rial', 64], ['', 'R', 'áster', 48],
  ['Base de ', 'd', 'atos', 105], ['', 'W', 'eb', 35], ['Pro', 'c', 'esos', 68], ['A', 'y', 'uda', 50],
]

const split = (s: string) => s.split(' ')
const bar1 = [
  split('new open save saveas layout layouts style'),
  split('pan panto zin zout zone zfull zsel zlay zlast znext view bknew bk refresh'),
  split('ident action ddx select dd form dd desel table abacus gear sigma measure dd tip note dd'),
]
const bar2 = [
  split('dsm gpkgnew shpnew feathernew chip'),
  split('pencils pencil saveed veeoff vertex ddx multi trash cut copy paste undo redo'),
  split('abc diagram abcpin t1 t2 t3 t4 t5'),
  ['osm'], ['python'], ['help'], ['nn'],
  split('tri veeoff ddx d1 d2 d3 d4 d5 d6 d7 d8 d9 veeoff s1 s1 s2 s3 s4 ddx'),
]
const side: [string, boolean][] = [
  ['vadd', false], ['raster', false], ['comma', false], ['featheradd', false], ['virt', false],
  ['pgadd', true], ['wmsadd', true], ['wcsadd', false], ['wfsadd', true], ['shpnew', true],
]
const browser: [string, string, number, boolean][] = [
  ['starfav', 'Favoritos', 69, false], ['home', 'Inicio del proyecto', 142, true], ['house', 'Inicio', 42, true],
  ['folder', 'C:\\', 23, true], ['folder', 'G:\\', 23, true], ['gpkg', 'GeoPackage', 94, false],
  ['feather', 'SpatiaLite', 74, false], ['elephant', 'PostGIS', 58, false], ['mssql', 'MSSQL', 55, false],
  ['oracle', 'Oracle', 49, false], ['db2', 'DB2', 30, false], ['wms', 'WMS/WMTS', 98, false],
  ['wms', 'XYZ Tiles', 69, true], ['wcs', 'WCS', 37, false], ['wfs', 'WFS', 34, false], ['ows', 'OWS', 38, false],
  ['arcmap', 'ArcGisMapServer', 131, false], ['arcfeat', 'ArcGisFeatureServer', 153, false], ['geonode', 'GeoNode', 72, false],
]
interface Layer { kind: string; name: string; w: number; child?: boolean; group?: boolean; current?: boolean }
const layers: Layer[] = [
  { kind: 'group', name: 'Marcos', w: 56, group: true },
  { kind: 'orange-line', name: 'Historial de ubicaciones-marcos', w: 255, child: true },
  { kind: 'group', name: 'Marta', w: 45, group: true },
  { kind: 'point', name: 'Vértices', w: 65, child: true },
  { kind: 'cyan-line', name: 'Historial de ubicaciones-marta', w: 245, child: true, current: true },
  { kind: 'red', name: 'Disuelto-municipios', w: 161 },
  { kind: 'amber', name: 'municipios', w: 86 },
  { kind: 'none', name: 'call2017', w: 67 },
]
const help: [string, number][] = [
  ['Este algoritmo extrae las partes coincidentes de los', 360],
  ['objetos espaciales de las capas de entrada y', 314],
  ['superposición. A los objetos de la capa de', 293],
  ['intersección de salida se les asignan los atributos', 341],
  ['de los objetos coincidentes de las capas de', 300],
  ['entrada y superposición.', 172],
]
const intro: [string, number][] = [
  ['Intersection : Location history + Madrid geometry. (It may', 1298],
  ['take minutes / hours depending on the amount of data', 1238],
  ['we have)', 200],
]
const inputs = [
  { label: 'Capa de entrada', lw: 118, icon: 'veegray', text: 'Historial de ubicaciones-marcos [EPSG:4326]', w: 310 },
  { label: 'Capa de superposición', lw: 158, icon: 'poly', text: 'Disuelto-municipios [EPSG:3042]', w: 224 },
]
const fields = [
  { label: 'Campos de entrada a mantener (dejar vacío para mantener todos los campos) [optional]', w: 618 },
  { label: 'Campo de intersección a conservar (dejar vacío para conservar todos los campos) [optional]', w: 645 },
]
</script>

<template>
  <div class="page">
    <h1 class="head"><span v-fit="710" class="t">We keep only Madrid locations</span></h1>
    <p v-for="l in intro" :key="l[0]" class="intro"><span v-fit="l[1]" class="t">{{ l[0] }}</span></p>

    <div class="app">
      <div class="titlebar">
        <Ico n="logo" /><span v-fit="107" class="t title">*clase3 - QGIS</span>
        <svg class="winbtns" viewBox="0 0 150 20" fill="none" stroke="#8a8a8a" stroke-width="1.400">
          <path d="M1 10h15M69 6h9v9h-9zM71.500 6V3.500H81V12.500h-3M132 2.500l16 15M148 2.500l-16 15" />
        </svg>
      </div>
      <div class="menubar">
        <span v-for="m in menus" :key="m[2]" v-fit="m[3]" class="t">{{ m[0] }}<u>{{ m[1] }}</u>{{ m[2] }}</span>
      </div>
      <div v-for="(bar, bi) in [bar1, bar2]" :key="bi" :class="['toolbar', 'tb' + bi]">
        <div v-for="(g, gi) in bar" :key="gi" class="group">
          <i class="grip"></i>
          <template v-for="(n, i) in g" :key="i">
            <span v-if="n === 'dd' || n === 'ddx'" :class="['drop', n]"></span>
            <span v-else :class="['cell', { pressed: n === 'pan' }]"><Ico :n="n" /></span>
          </template>
        </div>
      </div>

      <div class="work">
        <div class="sidebar">
          <i class="grip flat"></i>
          <div v-for="s in side" :key="s[0]" class="scell"><Ico :n="s[0]" /><span v-if="s[1]" class="drop dd"></span></div>
        </div>

        <div class="docks">
          <div class="dhead">
            <span v-fit="85" class="t">Navegador</span>
            <svg class="dbtns" viewBox="0 0 36 16" fill="none" stroke="#666" stroke-width="1.200">
              <rect x=".8" y=".8" width="14.400" height="14.400" rx="2" /><rect x="20.800" y=".8" width="14.400" height="14.400" rx="2" />
              <path d="M4 7h5v5.500H4zM6.500 7V3.800h5.500V9H9" /><path d="M24.500 4l7 8M31.500 4l-7 8" stroke-width="2.800" />
            </svg>
          </div>
          <div class="dtools up"><span v-for="n in ['addlayer', 'refresh', 'funnel', 'collapse', 'info']" :key="n" class="cell"><Ico :n="n" /></span></div>
          <div class="list browser">
            <div v-for="r in browser" :key="r[1]" class="row">
              <span class="twist"><i v-if="r[3]" class="right"></i></span><Ico :n="r[0]" /><span v-fit="r[2]" class="t name">{{ r[1] }}</span>
            </div>
          </div>
          <div class="splitter"><i></i></div>
          <div class="dhead">
            <span v-fit="47" class="t">Capas</span>
            <svg class="dbtns" viewBox="0 0 36 16" fill="none" stroke="#666" stroke-width="1.200">
              <rect x=".8" y=".8" width="14.400" height="14.400" rx="2" /><rect x="20.800" y=".8" width="14.400" height="14.400" rx="2" />
              <path d="M4 7h5v5.500H4zM6.500 7V3.800h5.500V9H9" /><path d="M24.500 4l7 8M31.500 4l-7 8" stroke-width="2.800" />
            </svg>
          </div>
          <div class="dtools">
            <span v-for="n in ['brush', 'cardsadd', 'eye', 'funnel', 'eps']" :key="n" class="cell"><Ico :n="n" /></span><span class="drop dd"></span>
            <span v-for="n in ['expand', 'collapse', 'rmlayer']" :key="n" class="cell"><Ico :n="n" /></span>
          </div>
          <div class="list layers">
            <div v-for="l in layers" :key="l.name" :class="['row', { child: l.child, current: l.current }]">
              <span class="twist"><i v-if="l.group" class="down"></i></span>
              <span class="check"><svg viewBox="0 0 20 20"><path d="M5 9l3.500 6L14 3.500" fill="none" stroke="#000" stroke-width="2.400" /></svg></span>
              <span class="sym"><Ico v-if="l.kind === 'group'" n="cards" /><b v-else :class="l.kind"></b></span>
              <span v-fit="l.w" :class="['t', 'name', { bold: !l.group }]">{{ l.name }}</span>
            </div>
          </div>
        </div>

        <div class="map">
          <svg viewBox="1002 638.500 2151 1318.500" preserveAspectRatio="none">
            <rect x="1002" y="638" width="2152" height="1320" fill="#2e3e60" />
            <g transform="translate(1700 660) scale(.33333)">
              <path fill="#c43b39" stroke="#2a2a2e" stroke-width="4" stroke-linejoin="round" d="M135 1180 140 1150 145 1130 158 1115 168 1085 163 1045 180 1020 205 970 207 935 213 905 205 893 193 884 215 850 228 818 226 788 262 782 272 745 285 735 295 708 310 702 330 670 362 652 378 662 402 638 425 638 440 628 475 620 505 618 530 600 548 597 563 578 580 574 600 535 607 520 632 495 650 465 668 422 690 402 705 395 718 373 765 341 800 336 812 317 840 290 860 268 872 234 898 222 902 187 945 153 970 135 990 134 1008 118 1040 122 1075 103 1103 102 1111 120 1104 150 1120 160 1133 180 1165 185 1182 205 1195 240 1205 265 1215 308 1248 312 1285 335 1300 348 1330 346 1350 343 1354 385 1337 415 1325 458 1345 470 1357 500 1380 525 1410 555 1420 580 1405 600 1372 618 1370 660 1345 700 1330 740 1325 780 1303 810 1297 838 1310 850 1305 860 1280 850 1273 860 1285 870 1275 880 1310 895 1312 918 1318 943 1290 950 1250 980 1262 1000 1255 1015 1240 1018 1253 1040 1235 1050 1240 1080 1230 1100 1215 1130 1203 1150 1200 1180z" />
              <path d="M898 1012L930 1130 938 1160M939 1011L955 1150" stroke="#8c8076" stroke-width="3.500" fill="none" />
              <g fill="none" stroke="#10e8d2" stroke-width="4.500"><circle cx="886" cy="967" r="9" /><circle cx="904" cy="969" r="9" /><circle cx="939" cy="1011" r="10" /><circle cx="930" cy="1130" r="10" /><circle cx="897" cy="1012" r="10" fill="#10e5cf" /><path d="M905 975l20 12M900 1005l30-20" /></g>
              <path d="M918 968l12-4 10 2 10 2v24l-4 10-14 8-12-10z" fill="#00ffe1" />
            </g>
            <path fill="#c43b39" stroke="#2a2a2e" stroke-width="1.300" d="M1990 1845 1979 1855 1965 1857 1952 1863 1943 1870 1936 1863 1924 1867 1912 1875 1901 1892 1885 1905 1870 1922 1860 1931 1847 1920 1834 1913 1818 1912 1812 1903 1814 1888 1825 1878 1840 1875 1843 1885 1849 1876 1854 1868 1863 1864 1868 1867 1866 1873 1876 1871 1883 1866 1879 1861 1894 1855 1901 1861 1896 1868 1904 1862 1906 1845z" />
            <path d="M2054 1848C2075 1870 2098 1882 2105 1900 2110 1912 2111 1930 2111 1958M2057 1850C2085 1868 2108 1890 2109 1912V1958" fill="none" stroke="#b9684c" stroke-width="1.400" />
          </svg>
        </div>
      </div>

      <div class="status">
        <div class="search"><Ico n="mag" /><span v-fit="211" class="t">Escriba para localizar (Ctrl+K)</span></div>
        <span v-fit="255" class="t tah s-msg">Eliminadas 3 entradas de la leyenda.</span>
        <span v-fit="86" class="t tah s-coord">Coordenada</span>
        <div class="box w-coord"><span v-fit="120" class="t tah">506379,4478751</span></div>
        <Ico n="extents" class="s-ext" />
        <span v-fit="45" class="t tah s-scale">Escala</span>
        <div class="box w-scale"><span v-fit="66" class="t tah">1:633190</span><span class="drop dd"></span></div>
        <Ico n="lock" class="s-lock" />
        <span v-fit="84" class="t tah s-amp">Amplificador</span>
        <div class="box w-spin"><span v-fit="41" class="t tah">100%</span><span class="spin"><i></i><i class="dn"></i></span></div>
        <span v-fit="62" class="t tah s-rot">Rotación</span>
        <div class="box w-rot"><span v-fit="34" class="t tah">0,0 °</span><span class="spin"><i></i><i class="dn"></i></span></div>
        <span class="check s-chk"><svg viewBox="0 0 20 20"><path d="M5 9l3.500 6L14 3.500" fill="none" stroke="#000" stroke-width="2.400" /></svg></span>
        <span v-fit="88" class="t tah s-rep">Representar</span>
        <Ico n="crs" class="s-crs" />
        <span v-fit="88" class="t tah s-epsg">EPSG:25830</span>
        <Ico n="bubble" class="s-bub" />
      </div>
    </div>

    <div class="dialog tah">
      <div class="dtitle">
        <Ico n="logo" /><span v-fit="92" class="t seg">Intersección</span>
        <svg class="close" viewBox="0 0 16 16"><path d="M1 1l14 14M15 1L1 15" stroke="#111" stroke-width="1.500" /></svg>
      </div>
      <div class="dmain">
        <div class="left">
          <div class="tabs">
            <div class="tab on"><span v-fit="81" class="t">Parámetros</span></div>
            <div class="tab"><span v-fit="58" class="t">Registro</span></div>
          </div>
          <div class="form">
            <template v-for="(c, i) in inputs" :key="c.label">
              <div :class="['lab', 'lab-in' + i]"><span v-fit="c.lw" class="t">{{ c.label }}</span></div>
              <div class="line">
                <div class="combo"><Ico :n="c.icon" /><span v-fit="c.w" class="t">{{ c.text }}</span><span class="drop dd"></span></div>
                <div class="btn dots short">...</div>
                <div class="btn iter"><Ico n="iterate" /></div>
              </div>
              <div class="chk off"><span class="check"></span><span v-fit="232" class="t">Objetos seleccionados solamente</span></div>
            </template>
            <template v-for="(f, i) in fields" :key="f.label">
              <div :class="['lab', 'lab-f' + i]"><span v-fit="f.w" class="t">{{ f.label }}</span></div>
              <div class="line"><div class="field dis"><span v-fit="185" class="t">0 elementos seleccionados</span></div><div class="btn dots">...</div></div>
            </template>
            <div class="lab lab-out"><span v-fit="86" class="t">Intersección</span></div>
            <div class="line"><div class="field out"><span v-fit="734" class="t">e/Documents/_WORK/10_CEU/02_curso_visual_data/_clases/_GIS/_created/_google/marcos-madrid.shp</span></div><div class="btn dots">...</div></div>
            <div class="chk">
              <span class="check"><svg viewBox="0 0 20 20"><path d="M5 9l3.500 6L14 3.500" fill="none" stroke="#000" stroke-width="2.400" /></svg></span>
              <span v-fit="403" class="t">Abrir el archivo de salida después de ejecutar el algoritmo</span>
            </div>
          </div>
        </div>
        <div class="mid"><i class="leftarrow"></i><i class="vdots"></i></div>
        <div class="help">
          <h2><span v-fit="155" class="t">Intersección</span></h2>
          <p v-for="l in help" :key="l[0]"><span v-fit="l[1]" class="t">{{ l[0] }}</span></p>
        </div>
      </div>
      <div class="foot f1"><div class="progress"><span v-fit="24" class="t">0%</span></div><div class="btn wide gray"><span v-fit="60" class="t">Cancelar</span></div></div>
      <div class="foot f2">
        <div class="btn batch"><span v-fit="242" class="t">Ejecutar como proceso por lotes...</span></div>
        <div class="btn wide run"><span v-fit="58" class="t">Ejecutar</span></div>
        <div class="btn wide"><span v-fit="45" class="t">Cerrar</span></div>
        <div class="btn wide"><span v-fit="45" class="t">Ayuda</span></div>
      </div>
    </div>

    <svg class="marks" viewBox="0 0 3509 2482" fill="none" stroke="#ff5349" stroke-width="4.300">
      <path d="M1798.300 1127.500V451H1984M1965.500 434.500L1984.500 451 1965.500 467.500" />
      <path d="M1685 1356V2149H1933M1669 1375L1685 1355.500 1701 1375" />
      <rect x="1292" y="1165.200" width="540" height="58.500" /><rect x="1292" y="1273.500" width="540" height="58.500" />
      <rect x="2111.500" y="1797" width="140.500" height="54.500" />
    </svg>
    <p class="note n1"><span v-fit="507" class="t">Input: Location history</span></p>
    <p class="note n2"><span v-fit="586" class="t">Input: Municipios Dissolve</span></p>
  </div>
</template>

<style>
body { margin: 0; background: #fff; }
</style>

<style scoped>
.page { position: relative; box-sizing: border-box; width: 3509px; height: 2482px; overflow: hidden; border: 4px solid #ff5349; background: #fff; padding: 183.500px 0 0 350.500px; }
.t { display: inline-block; white-space: pre; }
i { font-style: normal; }
.head, .intro, .note { margin: 0; height: 60px; font: 400 48px/60px 'Open Sans', 'Noto Sans', sans-serif; color: #ff5349; white-space: nowrap; }
.head { font-weight: 600; margin-bottom: 11.500px; }
.note { position: absolute; }
.n1 { left: 2006px; top: 405.500px; }
.n2 { left: 1982.500px; top: 2119px; }

.app { margin-top: 41px; width: 2799.500px; height: 1519.500px; display: flex; flex-direction: column; background: #f0f0f0; font: 17.300px/26px 'Open Sans', 'Noto Sans', sans-serif; color: #000; }
.ico { width: 23.300px; height: 23.300px; flex: none; display: block; overflow: visible; }
.titlebar { height: 37px; box-sizing: border-box; background: #fff; display: flex; align-items: center; padding: 1.500px 0 0 3px; }
.title { margin-left: 8px; color: #8f8f8f; font-size: 17px; }
.winbtns { width: 150px; height: 20px; margin-left: auto; margin-right: 28px; }
.menubar { box-sizing: border-box; height: 29px; border-bottom: 2px solid #d3d3d3; display: flex; gap: 20.500px; padding: 1.500px 0 0 15px; align-items: center; color: #949494; background: #efefef; }
.menubar u { text-decoration-thickness: 1.500px; text-underline-offset: 2px; }
.toolbar { box-sizing: border-box; display: flex; gap: 4.700px; background: linear-gradient(#fbfbfb, #eee); border-bottom: 2px solid #b4b4b4; align-items: center; }
.tb0 { height: 45px; }
.tb1 { height: 46px; }
.group { display: flex; align-items: center; }
.grip { width: 7px; height: 23px; margin: 0 5.500px 0 6px; background: radial-gradient(circle at 1.500px 1.500px, #b9b9b9 1px, transparent 1.300px) 0 0/4.400px 4.400px; }
.cell { width: 36.420px; height: 33px; display: flex; align-items: center; justify-content: center; box-sizing: border-box; }
.pressed { width: 34px; margin: 0 1.210px; border: 1px solid #a5a5a5; border-radius: 3px; background: #dcdcdc; }
.drop { width: 17.600px; display: flex; align-items: center; justify-content: center; flex: none; }
.drop::before { content: ''; margin-left: -3px; border: 5.500px solid transparent; border-top: 6.500px solid #555; border-bottom: 0; }
.ddx::before { border-top-color: #9a9a9a; }

.work { height: 1322px; display: flex; }
.sidebar { width: 63px; box-sizing: border-box; background: linear-gradient(90deg, #fcfcfc, #ededed); border-right: 1px solid #c0c0c0; display: flex; flex-direction: column; padding-top: 6px; }
.grip.flat { width: 23px; height: 7px; margin: 0 0 3.500px 22px; }
.scell { height: 35px; display: flex; align-items: center; padding-left: 12.200px; flex: none; }
.scell .drop { margin-left: 6px; }
.docks { width: 583px; display: flex; flex-direction: column; background: #f0f0f0; }
.dhead { height: 27px; display: flex; align-items: center; padding: 0 12px 0 7px; justify-content: space-between; }
.dhead .t { margin-top: 1px; }
.dbtns { width: 36px; height: 16px; }
.dtools { box-sizing: border-box; height: 46px; display: flex; align-items: center; padding-left: 5.500px; }
.up { padding-bottom: 2px; }
.list { box-sizing: border-box; width: 573.500px; margin-left: .5px; background: #fff; border: 2px solid #b5b5b5; overflow: hidden; border-left-color: #adadad; }
.browser { height: 574px; }
.layers { height: 593px; }
.row { height: 26.250px; display: flex; align-items: center; }
.twist { width: 33px; display: flex; justify-content: center; margin-right: 1px; }
.right { border: 5.500px solid transparent; border-left: 6.500px solid #555; border-right: 0; margin-right: 6px; }
.down { border: 6px solid transparent; border-top: 6.500px solid #555; border-bottom: 0; margin-right: 4px; }
.browser .name { margin-left: 8.500px; }
.splitter { height: 8.500px; display: flex; justify-content: center; }
.splitter i { width: 24px; height: 3px; margin-top: 1px; background: radial-gradient(circle at 1.500px 1.500px, #b9b9b9 1px, transparent 1.300px) 0 0/4.400px 4.400px; }
.check { box-sizing: border-box; width: 20.500px; height: 20px; border: 2px solid #bdbdbd; background: #fff; flex: none; }
.check svg { width: 100%; height: 100%; display: block; overflow: visible; }
.layers .check { margin-left: -.5px; }
.layers .row.child .check { margin-left: 28.500px; }
.sym { width: 24px; height: 24px; margin: 0 8.500px 0 8px; display: flex; align-items: center; justify-content: center; }
.sym b { display: block; }
.orange-line { width: 23px; height: 2.500px; background: #f0815c; }
.cyan-line { width: 23px; height: 1.500px; background: #a0e0dc; }
.child .sym { margin: 0 8px 0 9px; }
.point { width: 4px; height: 4px; border: 2px solid #6fe9ea; border-radius: 50%; background: #d5fbfb; }
.red, .amber { box-sizing: border-box; width: 24px; height: 23.500px; background: #c43b39; border: 1.500px solid #6d2a2c; }
.amber { background: #ff9e17; border-color: #8a6420; }
.bold { font-weight: 700; font-size: 16.800px; }
.current { background: #efefef; }
.current .name { text-decoration: underline; text-decoration-thickness: 1.500px; text-underline-offset: 2px; }
.map { flex: 1; border: 2px solid #b5b5b5; border-right: 0; border-top-width: 1px; background: #2e3e60; }
.map svg { display: block; width: 100%; height: 100%; }

.tah { font-family: 'DejaVu Sans Condensed', 'DejaVu Sans', sans-serif; font-stretch: condensed; font-size: 15.300px; }
.status { flex: 1; display: flex; align-items: center; background: #f0f0f0; padding-top: 1px; }
.status .tah { position: relative; top: .5px; }
.search, .box { box-sizing: border-box; height: 31px; background: #fff; border: 1px solid #a8a8a8; border-top: 2px solid #a5a5a5; border-radius: 3px; display: flex; align-items: center; }
.search { width: 371px; margin-left: 6px; padding-left: 10px; gap: 8px; color: #787878; font-size: 16.500px; }
.search .ico { width: 21px; }
.s-msg { margin-left: 11px; }
.s-coord { margin-left: 915.500px; }
.box { padding-left: 5px; margin-left: 6.500px; }
.w-coord { width: 134px; }
.s-ext { margin-left: 6px; }
.s-scale { margin-left: 17px; }
.w-scale { width: 118px; margin-left: 4px; }
.w-scale .drop { width: 28px; height: 100%; margin-left: auto; background: #f5f5f5; }
.s-lock { margin-left: 15px; }
.s-amp { margin-left: 9px; }
.w-spin { width: 125px; margin-left: 7px; }
.s-rot { margin-left: 14px; }
.w-rot { width: 122px; margin-left: 12px; }
.spin { width: 18px; height: 100%; margin-left: auto; background: #f3f3f3; border-left: 1px solid #ccc; display: flex; flex-direction: column; align-items: center; justify-content: center; gap: 5px; }
.spin i { border: 4.500px solid transparent; border-bottom: 5px solid #444; border-top: 0; }
.spin .dn { border-top: 5px solid #444; border-bottom: 0; }
.s-chk { margin-left: 11px; }
.s-rep { margin-left: 6px; }
.s-crs { margin-left: 24px; }
.s-epsg { margin-left: 5px; }
.s-bub { margin-left: 27px; }

.dialog { position: absolute; left: 1270.500px; top: 1039px; width: 1233.500px; height: 808.500px; box-sizing: border-box; border: 1px solid #1b6fb3; background: #f0f0f0; box-shadow: 0 5px 24px 4px rgba(10, 14, 26, .5); display: flex; flex-direction: column; line-height: 20px; color: #000; }
.dtitle { height: 44.500px; background: #fff; display: flex; align-items: center; padding: 0 15px 0 12px; flex: none; box-sizing: border-box; }
.seg { font: 17.300px/24px 'Open Sans', 'Noto Sans', sans-serif; margin-left: 9px; }
.close { width: 16px; height: 16px; margin-left: auto; }
.dmain { display: flex; height: 640px; padding: 16px 16px 0 16.500px; box-sizing: border-box; flex: none; }
.left { width: 801.500px; display: flex; flex-direction: column; padding-top: 1px; }
.tabs { display: flex; align-items: flex-end; height: 34.500px; }
.tab { box-sizing: border-box; height: 31.500px; width: 93px; background: #e8e8e8; border: 1px solid #adadad; border-bottom: 0; border-radius: 3px 3px 0 0; display: flex; align-items: center; justify-content: center; padding-top: 2px; }
.tab.on { width: 115px; height: 36px; background: #fff; margin-bottom: -1.500px; position: relative; padding: 1px 0 0; }
.form { box-sizing: border-box; height: 588px; border: 1px solid #a5a5a5; box-shadow: inset 0 0 0 2px #fbfbfb; padding: .5px 7px 0; }
.lab { box-sizing: border-box; display: flex; align-items: center; }
.lab .t, .chk .t { position: relative; top: 1px; }
.lab-in0 { height: 34px; padding-bottom: 2px; }
.lab-in1, .lab-f0 { height: 29px; padding-bottom: 5px; }
.lab-f1 { height: 37px; }
.lab-out { height: 36px; }
.line { display: flex; align-items: flex-start; }
.combo { box-sizing: border-box; width: 699px; height: 35px; border: 1px solid #a0a0a0; border-radius: 3px; background: linear-gradient(#fefefe, #ededed); display: flex; align-items: center; padding-left: 8px; }
.combo .t { margin-left: 4px; position: relative; top: .5px; }
.combo .drop { margin-left: auto; width: 28px; }
.combo .drop::before { border-width: 6px 4px 0; }
.btn { box-sizing: border-box; border: 1px solid #a5a5a5; border-radius: 3px; background: linear-gradient(#fefefe, #f0f0f0); height: 31.500px; display: flex; align-items: center; justify-content: center; }
.dots { width: 33px; margin-left: 9.500px; font-size: 13px; padding-top: 2px; }
.dots.short { height: 29px; margin-left: 9px; }
.iter { width: 35px; height: 34.500px; margin-left: 9px; }
.chk { height: 44px; display: flex; align-items: center; gap: 7px; }
.off { color: #808080; }
.off .check { background: #f3f3f3; border-color: #c8c8c8; border-width: 1px; }
.field { box-sizing: border-box; width: 742.500px; height: 32px; border: 1px solid #a0a0a0; border-top: 2px solid #a5a5a5; border-radius: 3px; background: #fff; display: flex; align-items: center; padding-left: 3.500px; }
.dis { background: #efefef; color: #808080; }
.out { padding-left: 0; }
.mid { width: 24px; display: flex; flex-direction: column; align-items: center; }
.leftarrow { border: 5px solid transparent; border-right: 6px solid #555; border-left: 0; margin: 4px 4px 0 0; }
.vdots { width: 3px; height: 27px; margin-top: 284px; margin-left: 3px; background: radial-gradient(circle at 1.500px 1.500px, #b9b9b9 1px, transparent 1.300px) 0 0/4.400px 4.400px; }
.help { box-sizing: border-box; width: 373px; height: 624px; background: #fff; border: 2px solid #b5b5b5; border-bottom-width: 1px; border-right-width: 1px; padding-left: 4.500px; color: #5c5c5c; }
.help h2 { margin: 8px 0 18px; font: 700 22.500px/28px 'DejaVu Sans', sans-serif; color: #505050; }
.help p { margin: 0; height: 19px; line-height: 19px; white-space: nowrap; }
.foot { display: flex; align-items: flex-start; padding: 0 16px 0 16.500px; flex: none; }
.f1 { margin-top: 37px; height: 38.500px; }
.progress { box-sizing: border-box; width: 1072.500px; height: 31px; background: #fff; border: 1px solid #a0a0a0; border-bottom-width: 2px; border-radius: 3px; display: flex; align-items: center; justify-content: center; }
.progress .t, .btn .t { position: relative; top: .5px; }
.wide { width: 116.500px; margin-left: 9px; }
.f1 .wide { height: 30.500px; }
.gray { color: #808080; }
.batch { width: 253px; }
.run { margin-left: 578px; border: 2px solid #42a5f5; background: linear-gradient(#fff, #eaf2f9); }
.marks { position: absolute; left: -4px; top: -4px; width: 3509px; height: 2482px; }
</style>
